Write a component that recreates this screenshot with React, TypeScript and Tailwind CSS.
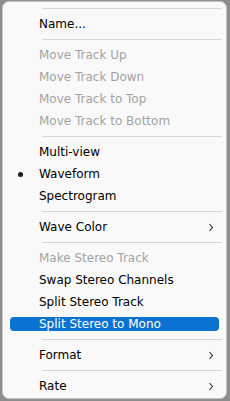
import React from "react";

type Item = {
  label: string;
  disabled?: boolean;
  checked?: boolean;
  submenu?: boolean;
  active?: boolean;
};

const groups: Item[][] = [
  [{ label: "Name..." }],
  [
    { label: "Move Track Up", disabled: true },
    { label: "Move Track Down", disabled: true },
    { label: "Move Track to Top", disabled: true },
    { label: "Move Track to Bottom", disabled: true },
  ],
  [
    { label: "Multi-view" },
    { label: "Waveform", checked: true },
    { label: "Spectrogram" },
  ],
  [{ label: "Wave Color", submenu: true }],
  [
    { label: "Make Stereo Track", disabled: true },
    { label: "Swap Stereo Channels" },
    { label: "Split Stereo Track" },
    { label: "Split Stereo to Mono", active: true },
  ],
  [{ label: "Format", submenu: true }],
  [{ label: "Rate", submenu: true }],
];

function Chevron({ light }: { light?: boolean }) {
  return (
    <svg width="6" height="9" viewBox="0 0 6 9" className="shrink-0">
      <path
        d="M1.5 1 L4.5 4.5 L1.5 8"
        fill="none"
        stroke={light ? "#ffffff" : "#333333"}
        strokeWidth="1.1"
      />
    </svg>
  );
}

function Separator() {
  return (
    <div className="py-[4px] pl-[39px] pr-[4px]">
      <div className="h-px bg-[#d6d6d6]" />
    </div>
  );
}

function MenuRow({ item }: { item: Item }) {
  const color = item.active
    ? "text-white"
    : item.disabled
    ? "text-[#a3a3a3]"
    : "text-black";
  return (
    <div className="h-[22px] py-[4px] px-[7px]">
      <div
        className={`relative h-[14px] flex items-center rounded-[4px] pl-[29px] pr-[5px] ${color} ${
          item.active ? "bg-[#0a73d2]" : ""
        }`}
      >
        {item.checked && (
          <span className="absolute left-[8px] top-[5px] w-[5px] h-[5px] rounded-full bg-[#1a1a1a]" />
        )}
        <span className="flex-1 leading-[14px] whitespace-nowrap">{item.label}</span>
        {item.submenu && <Chevron light={item.active} />}
      </div>
    </div>
  );
}

export default function App() {
  return (
    <div className="w-[230px] h-[401px] bg-[#8e8e8e] pt-[1px] pl-[2px] pr-[3px] pb-[2px]">
      <div
        className="h-full rounded-[7px] border border-[#c4c4c4] bg-[#f9f9f9] pt-[2px] text-[12px]"
        style={{ fontFamily: "'DejaVu Sans', sans-serif" }}
      >
        {groups.map((g, i) => (
          <div key={i}>
            <Separator />
            {g.map((item) => (
              <MenuRow key={item.label} item={item} />
            ))}
          </div>
        ))}
      </div>
    </div>
  );
}
